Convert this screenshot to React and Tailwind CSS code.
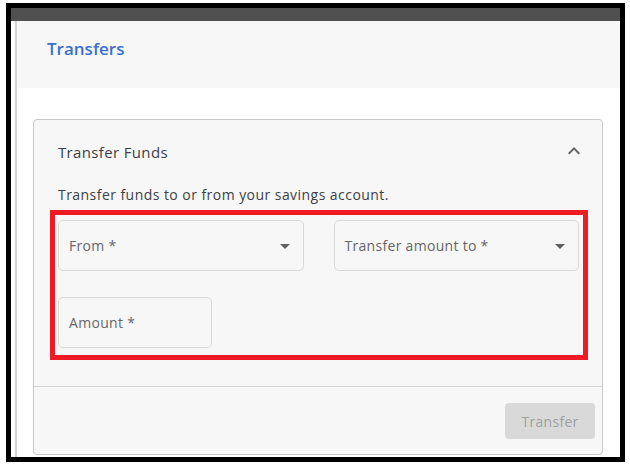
import React from 'react';

const font = { fontFamily: '"Open Sans", "Liberation Sans", sans-serif' };

const DropArrow = () => (
    <svg viewBox="0 0 24 24" className="w-6 h-6 fill-[#616161] shrink-0">
        <path d="M7 10l5 5 5-5z" />
    </svg>
);

const SelectField = ({ label }) => (
    <div className="h-[51px] flex items-center justify-between pl-[10px] pr-[6px] border border-[#d9d9d9] rounded-[5px] bg-[#f7f7f7]">
        <span className="text-[14px] tracking-[0.3px] text-[#666666]">{label}</span>
        <DropArrow />
    </div>
);

const App = () => {
    return (
        <div className="w-[630px] h-[468px] bg-white overflow-hidden pt-[3px] pl-[6px]" style={font}>
            <div className="w-[619px] h-[459px] border-[5px] border-black flex flex-col bg-white">
                <div className="h-[13px] bg-[#505050] shrink-0" />

                <div className="flex flex-1 min-h-0 pl-[4px]">
                    <div className="flex-1 flex flex-col border-l-2 border-[#d2d2d2]">
                        {/* page header */}
                        <div className="h-[67px] bg-[#f7f7f7] pl-[30px] pt-[16px] shrink-0">
                            <h1 className="text-[17px] leading-6 font-semibold text-[#3c6fd0]">Transfers</h1>
                        </div>

                        {/* accordion card */}
                        <div className="mt-[31px] ml-[16px] mr-[17px] h-[336px] border border-[#c9c9c9] rounded-[4px] bg-[#f7f7f7] flex flex-col relative">
                            <div className="h-[266px] pl-[24px] pr-[23px] pt-[20px]">
                                <div className="flex items-center justify-between">
                                    <h2 className="text-[15px] leading-6 tracking-[0.35px] text-[#3d3f46]">Transfer Funds</h2>
                                    <svg viewBox="0 0 24 24" className="w-6 h-6 fill-[#666666] -mt-[2px] mr-[-7px]">
                                        <path d="M7.41 15.41 12 10.83l4.59 4.58L18 14l-6-6-6 6z" />
                                    </svg>
                                </div>
                                <p className="mt-[21px] text-[14px] leading-5 tracking-[0.45px] text-[#3d3f46]">
                                    Transfer funds to or from your savings account.
                                </p>

                                <div className="mt-[15px] grid grid-cols-2 gap-x-[30px]">
                                    <SelectField label="From *" />
                                    <SelectField label="Transfer amount to *" />
                                </div>

                                <div className="mt-[26px] w-[154px] h-[51px] flex items-center pl-[10px] border border-[#d9d9d9] rounded-[5px]">
                                    <span className="text-[14px] tracking-[0.3px] text-[#666666]">Amount *</span>
                                </div>
                            </div>

                            <div className="flex-1 border-t border-[#d6d6d6] flex justify-end items-start pt-[16px] pr-[7px]">
                                <button
                                    disabled
                                    className="w-[90px] h-[36px] rounded-[4px] bg-[#d9d9d9] text-[14px] font-medium tracking-[0.3px] text-[#a0a0a0]"
                                >
                                    Transfer
                                </button>
                            </div>

                            {/* annotation box */}
                            <div className="absolute left-[16px] top-[90px] w-[538px] h-[150px] border-[5px] border-[#ed1c24]" />
                        </div>
                    </div>
                </div>
            </div>
        </div>
    );
};

export default App;
